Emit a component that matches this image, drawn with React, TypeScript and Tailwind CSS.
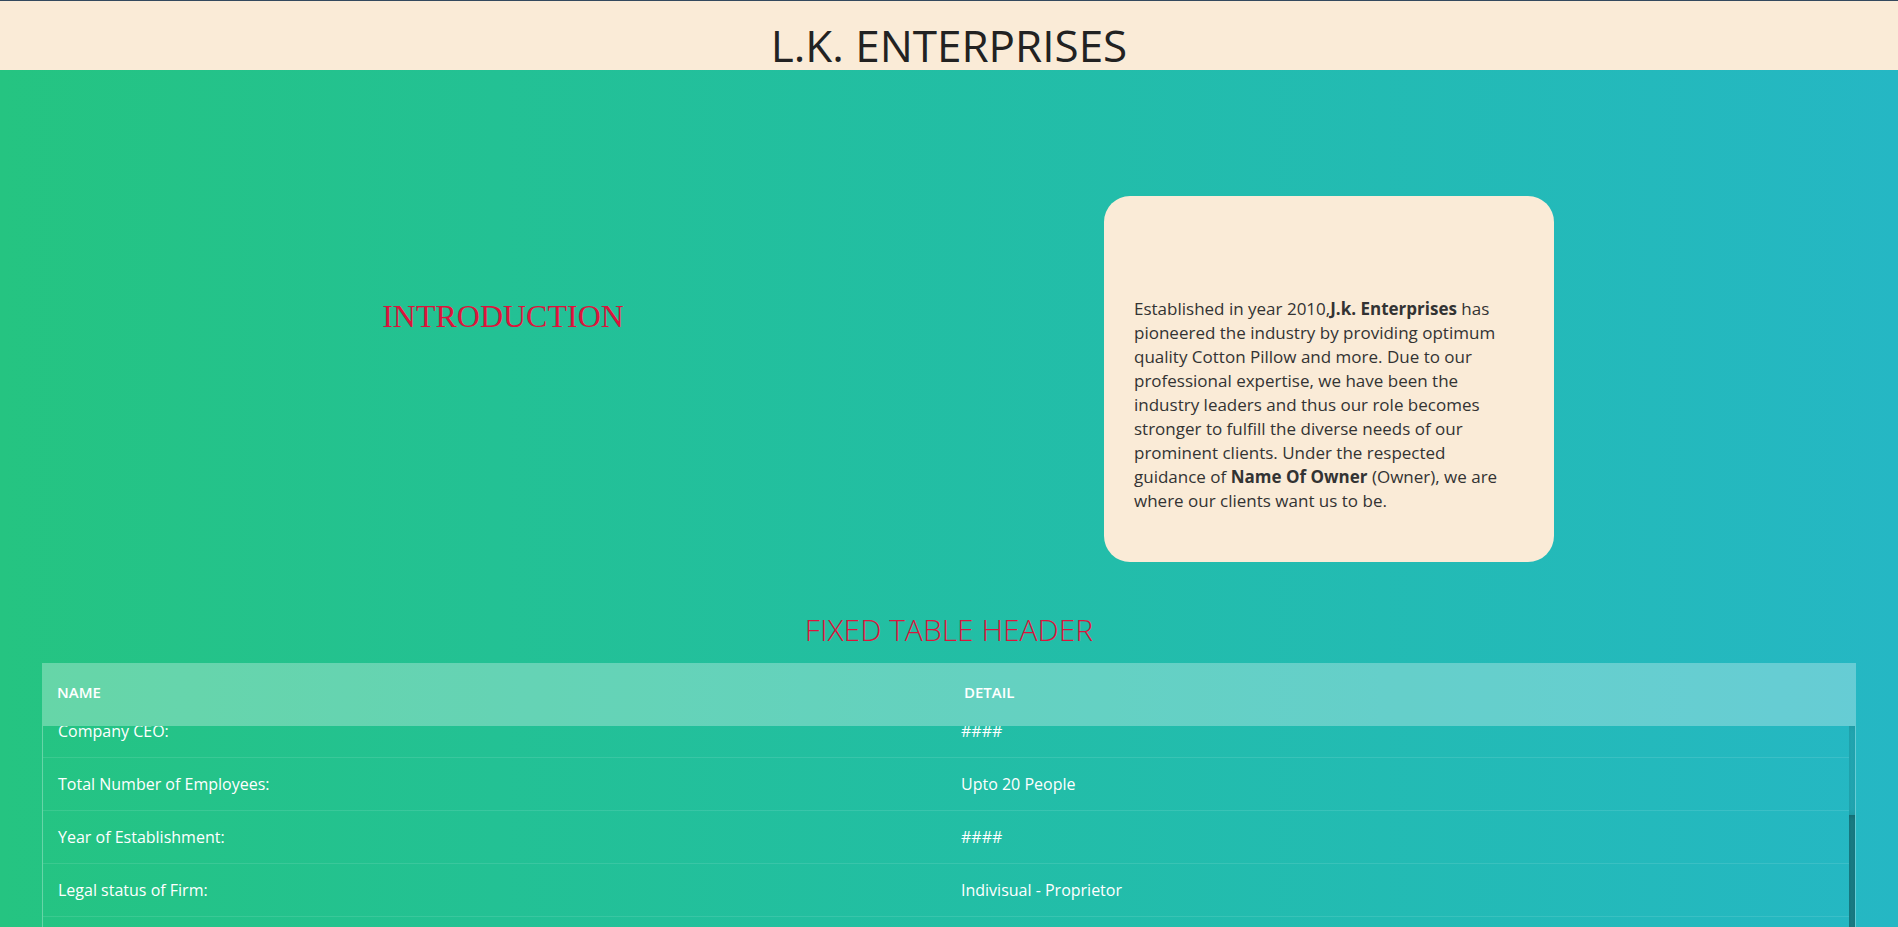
const rows = [
  { name: "Company CEO:", detail: "####" },
  { name: "Total Number of Employees:", detail: "Upto 20 People" },
  { name: "Year of Establishment:", detail: "####" },
  { name: "Legal status of Firm:", detail: "Indivisual - Proprietor" },
  { name: "Nature of Business:", detail: "Manufacturer" },
  { name: "GST No:", detail: "####" },
];

const body = "font-['Open_Sans',sans-serif]";

export default function App() {
  return (
    <div className={`h-[927px] overflow-hidden bg-gradient-to-r from-[#25c481] to-[#25b7c4] ${body}`}>
      {/* Top bar */}
      <header className="h-[70px] border-t border-[#34495e] bg-[#faebd7] text-center">
        <h1 className="pt-[14px] text-[44px] leading-[60px] text-[#222]">L.K. ENTERPRISES</h1>
      </header>

      {/* Intro */}
      <section className="flex">
        <div className="w-[1006px] pt-[228px] text-center">
          <h2 className="font-['Liberation_Serif',serif] text-[32px] leading-[37px] text-[#dc143c]">INTRODUCTION</h2>
        </div>
        <div className="pl-[98px] pt-[126px]">
          <div className="w-[450px] rounded-[26px] bg-[#faebd7] px-[30px] pb-[49px] pt-[101px] text-[17px] leading-[24px] text-[#333]">
            <p className="whitespace-nowrap">
              Established in year 2010,<b>J.k. Enterprises</b> has
              <br />
              pioneered the industry by providing optimum
              <br />
              quality Cotton Pillow and more. Due to our
              <br />
              professional expertise, we have been the
              <br />
              industry leaders and thus our role becomes
              <br />
              stronger to fulfill the diverse needs of our
              <br />
              prominent clients. Under the respected
              <br />
              guidance of <b>Name Of Owner</b> (Owner), we are
              <br />
              where our clients want us to be.
            </p>
          </div>
        </div>
      </section>

      {/* Table */}
      <section className="mx-[42px]">
        <h1 className="mb-[11px] mt-[45px] text-center text-[30px] font-light uppercase leading-[45px] text-[#dc143c]">
          Fixed Table Header
        </h1>

        <div className="grid grid-cols-2 bg-white/30">
          <div className="px-[15px] pb-[22px] pt-[18px] text-[15px] font-semibold uppercase leading-[23px] text-white">Name</div>
          <div className="px-[15px] pb-[22px] pt-[18px] text-[15px] font-semibold uppercase leading-[23px] text-white">Detail</div>
        </div>

        <div className="flex h-[300px] overflow-hidden border-x border-white/30">
          <div className="flex-1">
            <div className="-mt-[21px]">
              {rows.map((r) => (
                <div key={r.name} className="grid grid-cols-2 border-b border-white/10">
                  <div className="px-[15px] py-[15px] text-[16px] leading-[22px] text-white">{r.name}</div>
                  <div className="px-[15px] py-[15px] text-[16px] leading-[22px] text-white">{r.detail}</div>
                </div>
              ))}
            </div>
          </div>
          {/* scrollbar */}
          <div className="flex w-[6px] flex-col">
            <div className="h-[89px] bg-black/5 shadow-[inset_0_0_6px_rgba(0,0,0,0.15)]" />
            <div className="flex-1 bg-black/25 shadow-[inset_0_0_6px_rgba(0,0,0,0.3)]" />
          </div>
        </div>
      </section>
    </div>
  );
}
